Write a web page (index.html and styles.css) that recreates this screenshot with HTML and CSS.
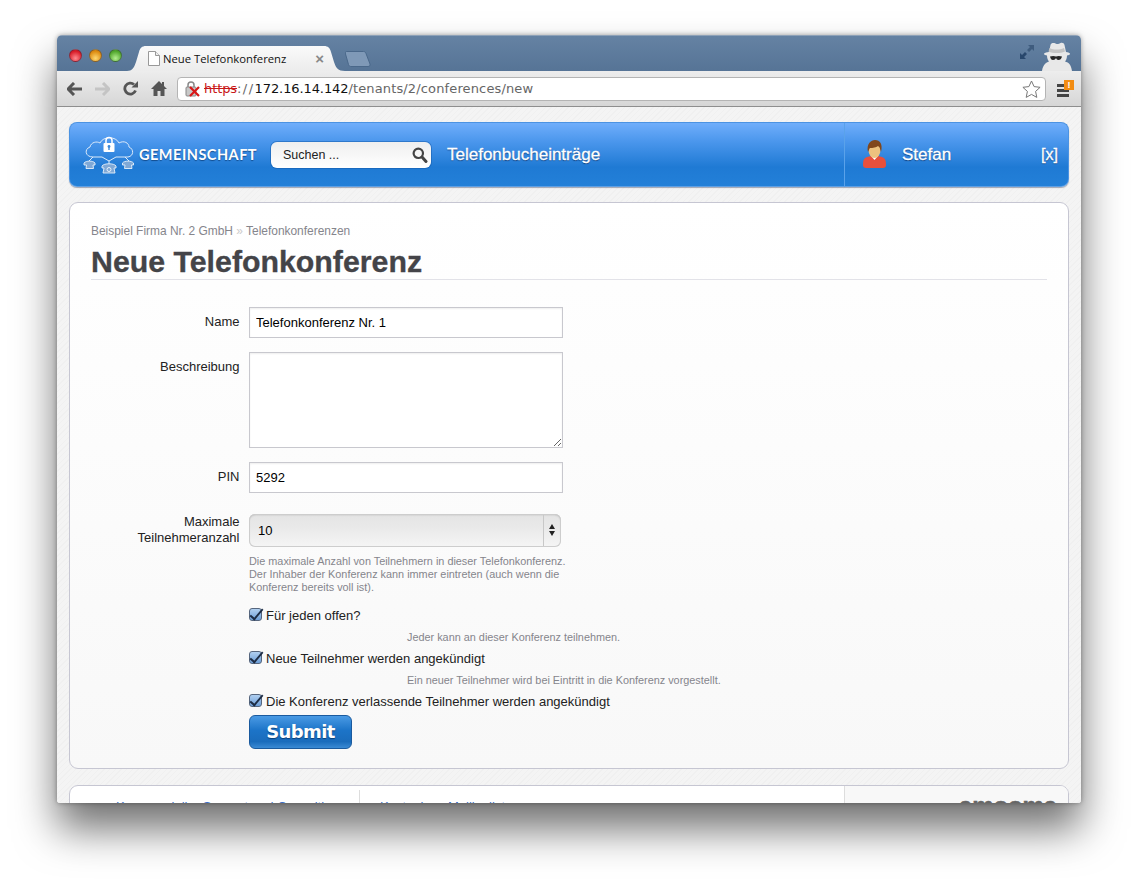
FILE: index.html
```html
<!DOCTYPE html>
<html lang="de">
<head>
<meta charset="utf-8">
<title>Neue Telefonkonferenz</title>
<link rel="stylesheet" href="styles.css">
</head>
<body>
<div class="window">
  <div class="titlebar">
    <div class="lights"><span class="light red"></span><span class="light amber"></span><span class="light green"></span></div>
    <div class="tab">
      <svg class="tab-shape" width="218" height="25" viewBox="0 0 218 25"><defs><linearGradient id="tabg" x1="0" y1="0" x2="0" y2="1"><stop offset="0" stop-color="#fafafa"/><stop offset="1" stop-color="#ececec"/></linearGradient></defs><path d="M0 25c5 0 7-3 9-9l3-10c1-4 3-6 7-6h178c4 0 6 2 7 6l3 10c2 6 4 9 11 9z" fill="url(#tabg)"/></svg>
      <svg class="doc" width="12" height="15" viewBox="0 0 12 15"><path d="M.5.5h7l4 4v10H.5z" fill="#fff" stroke="#999"/><path d="M7.500.5v4h4" fill="#eee" stroke="#999"/></svg>
      <span class="tab-title">Neue Telefonkonferenz</span>
      <span class="tab-close">×</span>
    </div>
    <svg class="newtab" width="26" height="16" viewBox="0 0 26 16"><path d="M1.500.5h17c1 0 2 .5 2.500 2l4 10.500c.4 1.500-.4 2.500-2 2.500H6c-1 0-2-.5-2.500-2L.5 3C0 1.500.5.500 1.500.5z" fill="#7f99b7" stroke="#4a688a"/></svg>
    <div class="title-right">
      <svg width="16" height="16" viewBox="0 0 16 16"><path d="M9 1h6v6l-2-2-3 3-2-2 3-3z" fill="#3f5c7e"/><path d="M7 15H1V9l2 2 3-3 2 2-3 3z" fill="#28476c"/></svg>
      <svg class="spy" width="33" height="29" viewBox="0 0 33 29"><path d="M9 10 10.500 3c.5-2 3-2.500 5-1.500s3 .5 5-.5c2-.5 3.500 0 4 2L26 10c4 .5 5 2 3 3l-2 .5c0 3-1 5-2 6 4 1 6 3 7 9.500H2c1-6.500 4-8.500 7-9.500-1-1-2-3-2-6l-2-.5c-2-1-1-2.500 4-3z" fill="#e8e8e8"/><path d="M9.500 6c4 2 10 2 14.500 0l1 3.500c-5 2-12 2-16.500 0z" fill="#c4c4c4"/><path d="M10 14.500c2-.8 4.500-.8 6 0 1.500-.8 4-.8 6 0-.5 2.500-2 3.500-3.500 3.500s-2-1-2.500-2c-.5 1-1.500 2-3 2s-2.500-1-3-3.500z" fill="#262626"/></svg>
    </div>
  </div>
  <div class="toolbar">
    <svg width="15" height="14" viewBox="0 0 15 14"><path d="M7 1 1 7l6 6M1.500 7H15" fill="none" stroke="#555" stroke-width="3"/></svg>
    <svg width="15" height="14" viewBox="0 0 15 14"><path d="m8 1 6 6-6 6M13.500 7H0" fill="none" stroke="#c4c4c4" stroke-width="3"/></svg>
    <svg width="15" height="15" viewBox="0 0 15 15"><path d="M12.500 9.500A5.500 5.500 0 1 1 11 3.500" fill="none" stroke="#555" stroke-width="2.800"/><path d="M8.500 6.500H15V0z" fill="#555"/></svg>
    <svg width="16" height="15" viewBox="0 0 16 15"><path d="M8 0 0 8h2.500v7h4v-5h3v5h4V8H16l-3-3V1h-2v2z" fill="#555"/></svg>
    <div class="omnibox">
      <svg class="lock" width="16" height="16" viewBox="0 0 16 16"><rect x="1" y="6" width="10" height="9" rx="1" fill="#c8c8c8" stroke="#888"/><path d="M3 6V4a3 3 0 0 1 6 0v2" fill="none" stroke="#888" stroke-width="1.500"/><path d="m5 6 9 9M14 6l-9 9" stroke="#d81818" stroke-width="2.200"/></svg>
      <span class="url"><s class="scheme">https</s><span class="dim slashes">://</span><span class="host">172.16.14.142</span><span class="dim">/tenants/2/conferences/new</span></span>
      <svg class="star" width="19" height="18" viewBox="0 0 19 18"><path d="m9.500 1 2.600 5.600 6 .7-4.500 4.100 1.200 6-5.300-3-5.300 3 1.200-6L.9 7.300l6-.7z" fill="#fff" stroke="#777"/></svg>
    </div>
    <div class="menu"><span class="bar"></span><span class="bar"></span><span class="bar"></span><span class="badge">!</span></div>
  </div>
  <div class="page">
    <header class="topbar">
      <div class="brand">
        <svg class="logo" width="52" height="42" viewBox="0 0 52 42" fill="none" stroke="#dceafa" stroke-width="1"><path d="M10 23C2 23 1 15 7 13c1-5 7-6 10-4 3-7 16-7 19 0 5-3 10 0 10 4 5 2 5 9-1 10H33l-7 4-7-4z"/><path d="M10 23 6 27M42 23l4 4M26 27v3"/><rect x="20.500" y="9" width="11" height="9" rx="1" fill="#fff" stroke="none"/><path d="M23 9V6.500a3 3 0 0 1 6 0V9" stroke="#fff" stroke-width="1.500"/><circle cx="26" cy="12.500" r="1.400" fill="#3b88d8" stroke="none"/><path d="M25.300 13h1.400v3h-1.400z" fill="#3b88d8" stroke="none"/><g fill="#7fa8d6" stroke="#e6f0fa" stroke-width=".9"><path d="M1 29c2-2.500 9-2.500 11 0v2h-2l.5 3.500H3l.5-3.500H1z"/><path d="M19 32c2-3 12-3 14 0v2h-2l1 5H20l1-5h-2z"/><path d="M39.500 29c2-2.500 9-2.500 11 0v2h-2l.5 3.500h-7.500l.5-3.500h-2.500z"/></g><circle cx="26" cy="35.500" r="2" stroke="#e6f0fa"/></svg>
        <span class="brand-name">GEMEINSCHAFT</span>
      </div>
      <div class="search">
        <span class="search-text">Suchen ...</span>
        <svg width="16" height="16" viewBox="0 0 16 16"><circle cx="6.300" cy="6.300" r="4.700" fill="none" stroke="#444" stroke-width="2.200"/><path d="m10 10 4 4.500" stroke="#444" stroke-width="3" stroke-linecap="round"/></svg>
      </div>
      <a class="nav-link">Telefonbucheinträge</a>
      <div class="user">
        <svg width="23" height="29" viewBox="0 0 23 29"><path d="M0 25c0-5 1-7 4-8l4-1h7l4 1c3 1 4 3 4 8 0 2-1 3-3 3H3c-2 0-3-1-3-3z" fill="#e8503c"/><path d="M8 16l3.500 4 3.500-4z" fill="#fff"/><ellipse cx="11.500" cy="10" rx="6" ry="8" fill="#edc27e"/><path d="M5 12C3 4 8 0 12 0c5 0 8 4 6 12-1-3-1-5-3-6-3 2-7 2-8 2-1 1-1 2-2 4z" fill="#81471c"/></svg>
        <span class="user-name">Stefan</span>
        <span class="logout">[x]</span>
      </div>
    </header>
    <main class="card">
      <div class="crumbs">Beispiel Firma Nr. 2 GmbH <span class="sep">»</span> Telefonkonferenzen</div>
      <h1 class="title">Neue Telefonkonferenz</h1>
      <form class="form">
        <div class="row"><label class="lbl">Name</label><input class="field" type="text" value="Telefonkonferenz Nr. 1"></div>
        <div class="row"><label class="lbl">Beschreibung</label><textarea class="field area"></textarea></div>
        <div class="row row-pin"><label class="lbl">PIN</label><input class="field" type="text" value="5292"></div>
        <div class="row row-select"><label class="lbl lbl-two">Maximale Teilnehmeranzahl</label>
          <div class="select"><span>10</span><span class="updown"></span></div>
        </div>
        <p class="help help-block">Die maximale Anzahl von Teilnehmern in dieser Telefonkonferenz. Der Inhaber der Konferenz kann immer eintreten (auch wenn die Konferenz bereits voll ist).</p>
        <label class="check"><input type="checkbox" checked>Für jeden offen?</label>
        <p class="help help-line">Jeder kann an dieser Konferenz teilnehmen.</p>
        <label class="check"><input type="checkbox" checked>Neue Teilnehmer werden angekündigt</label>
        <p class="help help-line">Ein neuer Teilnehmer wird bei Eintritt in die Konferenz vorgestellt.</p>
        <label class="check"><input type="checkbox" checked>Die Konferenz verlassende Teilnehmer werden angekündigt</label>
        <button class="submit" type="button">Submit</button>
      </form>
    </main>
    <footer class="foot">
      <div class="foot-a">Kommerzieller Support und Consulting</div>
      <div class="foot-b">Kostenlose Mailingliste</div>
      <div class="foot-c">amooma</div>
    </footer>
  </div>
</div>
</body>
</html>
```

FILE: styles.css
```css
* { box-sizing: border-box; }
html, body { margin: 0; height: 882px; overflow: hidden; background: #fff; }
body { padding: 35px 57px 0; font-family: "Liberation Sans", Arial, sans-serif; font-size: 13px; color: #222; }

.window {
  width: 1024px; height: 768px; overflow: hidden; display: flex; flex-direction: column;
  border-radius: 5px 5px 3px 3px;
  box-shadow: 0 26px 42px rgba(0,0,0,.56), 0 0 5px rgba(0,0,0,.35);
  background: #f2f2f2;
}

.titlebar {
  height: 36px; flex: none; display: flex; align-items: flex-end; position: relative;
  background: linear-gradient(#6582a3, #567496);
  border-top: 1px solid #8fa2b8;
}
.lights { display: flex; gap: 7px; padding: 0 0 9px 12px; align-self: flex-end; }
.light { width: 13px; height: 13px; border-radius: 50%; border: 1px solid rgba(40,40,60,.45); }
.red { background: radial-gradient(circle at 50% 75%, #ff8a90, #d81c28 70%); }
.amber { background: radial-gradient(circle at 50% 75%, #ffd870, #dc8a10 70%); }
.green { background: radial-gradient(circle at 50% 75%, #b4ee90, #50a62c 70%); }
.tab { width: 218px; height: 25px; margin-left: 5px; position: relative; display: flex; align-items: center; padding: 0 16px 0 21px; }
.tab-shape { position: absolute; left: 0; top: 0; }
.doc, .tab-title, .tab-close { position: relative; }
.tab-title { margin-left: 3px; font: 11.300px "Open Sans", sans-serif; color: #111; white-space: nowrap; flex: 1; }
.tab-close { color: #888; font: bold 15px "Liberation Sans", sans-serif; margin-right: 5px; }
.newtab { margin: 0 0 4px 0; }
.title-right { margin-left: auto; display: flex; align-items: flex-end; gap: 5px; padding-right: 8px; }
.title-right svg:first-child { margin-bottom: 11px; }

.toolbar {
  height: 36px; flex: none; display: flex; align-items: center; gap: 13px; padding: 0 7px 0 10px;
  background: linear-gradient(#ededed, #d6d6d6);
  border-bottom: 1px solid #8e8e8e;
}
.omnibox {
  flex: 1; height: 24px; margin-left: -3px; display: flex; align-items: center; padding: 0 4px 0 7px;
  background: #fff; border: 1px solid #b4b4b4; border-radius: 4px;
}
.url { margin-left: 3px; font: 13px "DejaVu Sans", sans-serif; color: #111; white-space: nowrap; flex: 1; letter-spacing: .14px; }
.scheme { color: #c81818; letter-spacing: -.1px; }
.dim { color: #666; }
.slashes { letter-spacing: 1.500px; }
.host { letter-spacing: -.1px; }
.menu { width: 17px; height: 16px; position: relative; display: flex; flex-direction: column; gap: 2px; padding-top: 3px; margin-left: -2px; }
.bar { width: 12px; height: 3px; background: #444; }
.badge { position: absolute; left: 7px; top: -1px; width: 10px; height: 10px; background: #f28c12; color: #fff; font: bold 9px/10px "Liberation Sans", sans-serif; text-align: center; }

.page {
  flex: 1; padding: 15px 12px 0;
  background: repeating-linear-gradient(-45deg, #f0f0f0 0 1px, #f4f4f4 1px 4px);
}
.topbar {
  width: 1000px; height: 65px; display: flex; align-items: center; color: #fff;
  border-radius: 8px; border: 1px solid #4c93e2; border-bottom-color: #5fa0e4;
  background: linear-gradient(#70aefb 0, #4a96ec 30%, #1f7ad4 70%, #2380d8 100%);
  box-shadow: 0 1px 1px rgba(60,70,100,.45);
}
.brand { width: 201px; flex: none; padding-left: 13px; display: flex; align-items: center; gap: 4px; }
.logo { flex: none; }
.brand-name { font: bold 14.500px "Lato", sans-serif; letter-spacing: .5px; text-shadow: 0 1px 1px rgba(0,40,90,.6); white-space: nowrap; }
.search {
  width: 160px; height: 26px; display: flex; align-items: center; justify-content: space-between; padding: 0 3px 0 12px;
  background: linear-gradient(#efefef, #fff); border-radius: 6px; box-shadow: 0 0 0 1px rgba(20,90,170,.5);
  color: #222;
}
.search-text { font-size: 12.500px; }
.nav-link { margin-left: 16px; width: 397px; font-size: 17px; -webkit-text-stroke: .3px #fff; text-shadow: 0 1px 1px rgba(0,30,80,.7); }
.user { flex: 1; align-self: stretch; display: flex; align-items: center; padding: 0 10px 0 18px; border-left: 1px solid #5aa2ea; }
.user-name { margin-left: 16px; font-size: 17px; flex: 1; -webkit-text-stroke: .3px #fff; text-shadow: 0 1px 1px rgba(0,30,80,.7); }
.logout { font-size: 16px; -webkit-text-stroke: .3px #fff; text-shadow: 0 1px 1px rgba(0,30,80,.7); }

.card {
  width: 1000px; height: 567px; margin-top: 15px; padding: 20px 21px 20px;
  border: 1px solid #c6c6d2; border-radius: 9px;
  background: linear-gradient(#fff, #f8f8f8);
}
.crumbs { font-size: 11.950px; line-height: 16px; color: #85858c; }
.sep { color: #ccc; }
.title { margin: 4px 0 27px; height: 37px; font-size: 30.300px; line-height: 38px; font-weight: bold; color: #444448; -webkit-text-stroke: .35px #444448; border-bottom: 1px solid #e2e2e8; }

.row { display: grid; grid-template-columns: 148.500px 314px; column-gap: 9.500px; margin-bottom: 14px; }
.row-pin { margin-bottom: 21px; }
.row-select { margin-bottom: 8px; }
.lbl { display: block; text-align: right; line-height: 16px; padding-top: 7px; color: #222; font-size: 13px; }
.lbl-two { padding-top: 0; padding-left: 30px; }
.field {
  width: 314px; height: 31px; margin: 0; padding: 0 6px; display: block; background: #fff; color: #000;
  border: 1px solid #c8c8ce; box-shadow: inset 0 1px 2px rgba(0,0,0,.07); border-radius: 0;
  font: 13px "Liberation Sans", sans-serif; outline: none;
}
.area { height: 96px; resize: both; }
.select {
  width: 312px; height: 33px; display: flex; align-items: center; padding-left: 9px; position: relative;
  background: linear-gradient(#e4e4e4, #e9e9e9 40%, #f5f5f5); border-radius: 6px;
  box-shadow: inset 0 0 0 1px #cdcdcd, inset 0 1px 2px rgba(0,0,0,.2); color: #000;
}
.updown { position: absolute; right: 0; top: 1px; bottom: 1px; width: 18px; border-left: 1px solid #c8c8c8; }
.updown::before, .updown::after { content: ""; position: absolute; left: 5px; border: 3.500px solid transparent; }
.updown::before { top: 9px; border-bottom: 5px solid #222; border-top: 0; }
.updown::after { top: 16px; border-top: 5px solid #222; border-bottom: 0; }
.help { margin: 0; font-size: 10.870px; line-height: 13px; color: #85858c; }
.help-block { margin-left: 158px; width: 322px; margin-bottom: 13px; }
.help-line { margin: 8px 0 6px 316px; white-space: nowrap; }
.check { display: flex; align-items: flex-start; height: 16px; margin-left: 158px; line-height: 18px; color: #222; white-space: nowrap; }
.check input {
  appearance: none; width: 13px; height: 13px; margin: 1px 4px 0 0; position: relative; border-radius: 3px;
  border: 1px solid #56667e; background: linear-gradient(#b0cff0, #6e9fd8);
}
.check input::after {
  content: ""; position: absolute; left: 3px; top: -3px; width: 5px; height: 12px;
  border: solid #1d2c44; border-width: 0 2.500px 2.500px 0; transform: rotate(40deg) scaleX(.9);
}
.submit {
  display: block; width: 103px; height: 34px; margin: 6px 0 0 158px; padding: 0 0 2px;
  border: 1px solid #1a5a9e; border-radius: 6px; color: #fff;
  background: linear-gradient(#4a9ae4, #1c74c8 45%, #1a6cbc 80%, #3a8ad4);
  font: bold 18px "DejaVu Sans", sans-serif; letter-spacing: -.6px; text-shadow: 0 1px 1px rgba(0,30,70,.6);
}

.foot {
  width: 1000px; height: 100px; margin-top: 16px; display: flex;
  border: 1px solid #c6c6d2; border-radius: 9px; background: #fff; color: #3c6fc8; overflow: hidden;
}
.foot-a { width: 290px; padding: 9px 0 0 46px; border-right: 1px solid #ddd; margin-top: 4px; white-space: nowrap; }
.foot-b { width: 484px; padding: 13px 0 0 20px; white-space: nowrap; }
.foot-c { flex: 1; background: #f8f8f8; border-left: 1px solid #ddd; text-align: right; padding: 6px 11px 0 0; color: #666; font-size: 24px; font-weight: bold; letter-spacing: -.1px; -webkit-text-stroke: .5px #666; }
```
